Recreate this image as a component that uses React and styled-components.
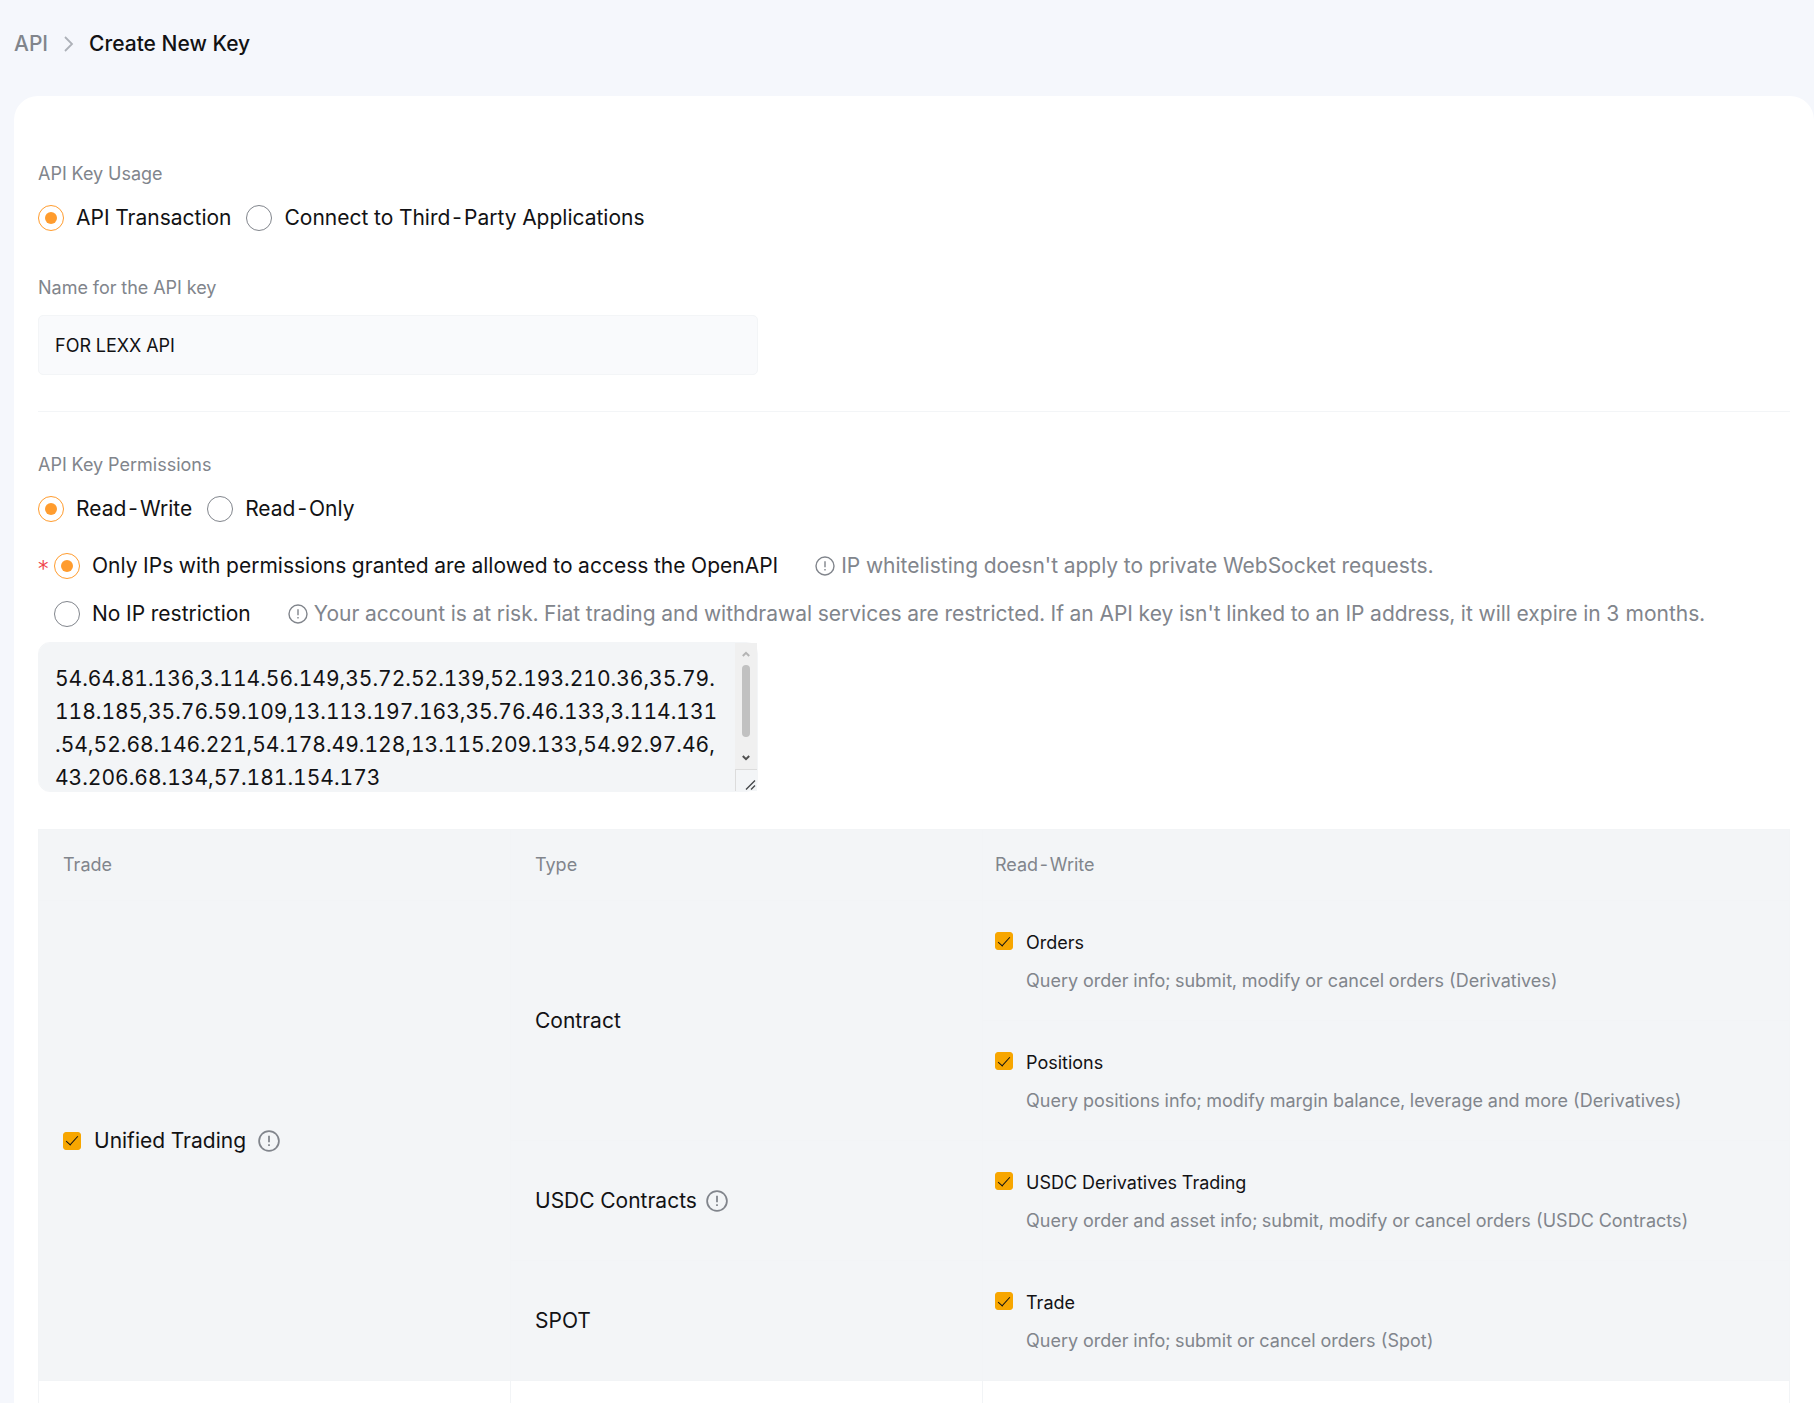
import React, { useState } from "react";
import styled, { createGlobalStyle } from "styled-components";

const GlobalStyle = createGlobalStyle`
  *, *::before, *::after { box-sizing: border-box; }
  body {
    margin: 0;
    background: #f5f7fc;
    color: #121214;
    font-family: Inter, "Liberation Sans", sans-serif;
    font-size: 21px;
    line-height: 30px;
    font-variant-numeric: tabular-nums;
  }
`;

const Page = styled.main`
  height: 100vh;
  overflow: hidden;
  padding-left: 14px;
`;

const Breadcrumb = styled.nav`
  display: flex;
  align-items: center;
  gap: 13px;
  height: 96px;
  padding-bottom: 8px;
`;

const CrumbLink = styled.a`
  color: #81858c;
  font-weight: 500;
  text-decoration: none;
`;

const CrumbCurrent = styled.span`
  font-weight: 500;
`;

const Panel = styled.section`
  min-height: calc(100vh - 96px);
  padding: 63px 24px 0;
  background: #ffffff;
  border-radius: 24px 24px 0 0;
`;

const Group = styled.fieldset`
  margin: 0;
  padding: 0;
  border: 0;
`;

const Caption = styled.legend`
  display: block;
  padding: 0;
  color: #81858c;
  font-size: 18px;
  line-height: 30px;
`;

const NameCaption = styled(Caption).attrs({ as: "label" })`
  margin-top: 40px;
`;

const Options = styled.div`
  display: flex;
  gap: 15px;
  margin-top: 14px;
`;

const Choice = styled.label`
  display: inline-flex;
  align-items: center;
  gap: 12px;
  cursor: pointer;
`;

const Radio = styled.input.attrs({ type: "radio" })`
  appearance: none;
  flex: none;
  display: grid;
  place-items: center;
  width: 26px;
  height: 26px;
  margin: 0;
  border: 1px solid #81858c;
  border-radius: 50%;
  background: #ffffff;

  &:checked { border-color: #ff9c2e; }
  &:checked::before {
    content: "";
    width: 12px;
    height: 12px;
    border-radius: 50%;
    background: #ff9c2e;
  }
`;

const NameInput = styled.input`
  display: block;
  width: 100%;
  max-width: 720px;
  height: 60px;
  margin-top: 12px;
  padding: 0 16px;
  border: 1px solid #f3f5f7;
  border-radius: 5px;
  background: #f9fafc;
  color: #121214;
  font: inherit;
  font-size: 18px;
  outline: none;
`;

const Divider = styled.hr`
  height: 1px;
  margin: 36px 0 38px;
  border: 0;
  background: #f3f5f7;
`;

const IpList = styled.div`
  display: grid;
  gap: 18px;
  margin-top: 27px;
`;

const IpRow = styled.div`
  display: grid;
  grid-template-columns: 16px auto 1fr;
  align-items: center;
`;

const Required = styled.span`
  padding-top: 6px;
  color: #ef454a;
  font-family: "DejaVu Sans", sans-serif;
  line-height: 24px;
`;

const Hint = styled.span`
  display: flex;
  align-items: center;
  gap: 6px;
  margin-left: 37px;
  color: #81858c;
`;

const IpBox = styled.div`
  position: relative;
  max-width: 720px;
  margin-top: 13px;
`;

const IpText = styled.textarea`
  display: block;
  width: 100%;
  height: 150px;
  padding: 19px 36px 0 16px;
  border: 1px solid #f3f5f7;
  border-radius: 12px;
  background: #f3f5f7;
  color: #121214;
  font: inherit;
  font-variant-numeric: tabular-nums;
  line-height: 33px;
  line-break: anywhere;
  resize: none;
  outline: none;
`;

const ScrollRail = styled.div`
  position: absolute;
  top: 1px;
  right: 1px;
  bottom: 1px;
  display: flex;
  flex-direction: column;
  width: 22px;
  background: #f0f0f0;
`;

const ScrollTrack = styled.div`
  flex: 1;
  display: flex;
  flex-direction: column;
  align-items: center;
  justify-content: space-between;
  padding: 8px 0;
`;

const ScrollThumb = styled.div`
  width: 8px;
  height: 72px;
  margin-bottom: 10px;
  border-radius: 4px;
  background: #c1c1c1;
`;

const ResizeCorner = styled.div`
  display: flex;
  align-items: flex-end;
  justify-content: flex-end;
  height: 22px;
  border: solid #dcdcdc;
  border-width: 1px 0 0 1px;
  background: #f3f5f7;
`;

const Permissions = styled.table`
  width: 100%;
  margin-top: 37px;
  border-collapse: collapse;
  table-layout: fixed;
  background: #f3f5f7;

  th, td {
    padding: 0 24px;
    border: 1px solid #f2f4f6;
    text-align: left;
    font-weight: 400;
  }
  th {
    height: 71px;
    color: #81858c;
    font-size: 18px;
  }
  td { height: 120px; }
  th:last-child { padding-left: 12px; }
`;

const PermissionCell = styled.td`
  && { padding: 0 12px 4px; }
`;

const EmptyRow = styled.tr`
  background: #ffffff;
`;

const Column = styled.col`
  width: ${(p) => p.$width};
`;

const WithIcon = styled.div`
  display: flex;
  align-items: center;
  gap: ${(p) => p.$gap};
`;

const Checkbox = styled.input.attrs({ type: "checkbox" })`
  appearance: none;
  flex: none;
  display: grid;
  place-items: center;
  width: 18px;
  height: 18px;
  margin: 0;
  border: 1px solid #81858c;
  border-radius: 3px;
  background: #ffffff;

  &:checked {
    border-color: #f7a600;
    background: #f7a600;
  }
  &:checked::before {
    content: "";
    width: 12px;
    height: 6px;
    margin-bottom: 3px;
    border: solid #121214;
    border-width: 0 0 1px 1px;
    transform: rotate(-48deg);
  }
`;

const AccountLabel = styled(Choice)`
  gap: 13px;
`;

const PermissionLabel = styled(AccountLabel)`
  align-items: flex-start;
  font-size: 18px;

  ${Checkbox} { margin-top: 4px; }
`;

const Description = styled.div`
  margin-top: 8px;
  padding-left: 31px;
  color: #81858c;
  font-size: 18px;
`;

function InfoIcon({ size = 20, stroke = 1.4 }) {
  return (
    <svg width={size} height={size} viewBox="0 0 20 20" fill="none" stroke="#81858c" strokeWidth={stroke} aria-hidden="true">
      <circle cx="10" cy="10" r="9" />
      <path d="M10 5.2v6M10 13v1.6" />
    </svg>
  );
}

function ChevronIcon() {
  return (
    <svg width="15" height="18" viewBox="0 0 15 18" fill="none" stroke="#adb1b8" strokeWidth="1.8" aria-hidden="true">
      <path d="M4 2l7 7-7 7" />
    </svg>
  );
}

function ArrowIcon({ color, d }) {
  return (
    <svg width="8" height="6" viewBox="0 0 8 6" fill="none" stroke={color} strokeWidth="2" aria-hidden="true">
      <path d={d} />
    </svg>
  );
}

function Scrollbar() {
  return (
    <ScrollRail aria-hidden="true">
      <ScrollTrack>
        <ArrowIcon color="#b4b4b4" d="M.8 5L4 1.8 7.2 5" />
        <ScrollThumb />
        <ArrowIcon color="#505050" d="M.8 1L4 4.2 7.2 1" />
      </ScrollTrack>
      <ResizeCorner>
        <svg width="12" height="12" viewBox="0 0 12 12" stroke="#46484c" strokeWidth="1.4">
          <path d="M1 10.5L10 1.5M6 10.5l4-4" />
        </svg>
      </ResizeCorner>
    </ScrollRail>
  );
}

function RadioOption({ name, value, selected, onSelect }) {
  return (
    <Choice>
      <Radio name={name} checked={selected === value} onChange={() => onSelect(value)} />
      {value}
    </Choice>
  );
}

function Permission({ title, description }) {
  return (
    <PermissionCell>
      <PermissionLabel>
        <Checkbox defaultChecked />
        {title}
      </PermissionLabel>
      <Description>{description}</Description>
    </PermissionCell>
  );
}

const IPS = [
  "54.64.81.136", "3.114.56.149", "35.72.52.139", "52.193.210.36", "35.79.118.185",
  "35.76.59.109", "13.113.197.163", "35.76.46.133", "3.114.131.54", "52.68.146.221",
  "54.178.49.128", "13.115.209.133", "54.92.97.46", "43.206.68.134", "57.181.154.173",
].join(",");

const ONLY_IPS = "Only IPs with permissions granted are allowed to access the OpenAPI";
const NO_IP = "No IP restriction";

export default function App() {
  const [usage, setUsage] = useState("API Transaction");
  const [access, setAccess] = useState("Read-Write");
  const [ip, setIp] = useState(ONLY_IPS);

  return (
    <Page>
      <GlobalStyle />
      <Breadcrumb aria-label="Breadcrumb">
        <CrumbLink href="#api">API</CrumbLink>
        <ChevronIcon />
        <CrumbCurrent aria-current="page">Create New Key</CrumbCurrent>
      </Breadcrumb>
      <Panel>
        <Group>
          <Caption>API Key Usage</Caption>
          <Options>
            <RadioOption name="usage" value="API Transaction" selected={usage} onSelect={setUsage} />
            <RadioOption name="usage" value="Connect to Third-Party Applications" selected={usage} onSelect={setUsage} />
          </Options>
        </Group>
        <NameCaption htmlFor="key-name">Name for the API key</NameCaption>
        <NameInput id="key-name" defaultValue="FOR LEXX API" />
        <Divider />
        <Group>
          <Caption>API Key Permissions</Caption>
          <Options>
            <RadioOption name="access" value="Read-Write" selected={access} onSelect={setAccess} />
            <RadioOption name="access" value="Read-Only" selected={access} onSelect={setAccess} />
          </Options>
        </Group>
        <IpList>
          <IpRow>
            <Required>*</Required>
            <RadioOption name="ip" value={ONLY_IPS} selected={ip} onSelect={setIp} />
            <Hint><InfoIcon />IP whitelisting doesn't apply to private WebSocket requests.</Hint>
          </IpRow>
          <IpRow>
            <span />
            <RadioOption name="ip" value={NO_IP} selected={ip} onSelect={setIp} />
            <Hint><InfoIcon />Your account is at risk. Fiat trading and withdrawal services are restricted. If an API key isn't linked to an IP address, it will expire in 3 months.</Hint>
          </IpRow>
        </IpList>
        <IpBox>
          <IpText aria-label="IP addresses" defaultValue={IPS} spellCheck={false} />
          <Scrollbar />
        </IpBox>
        <Permissions>
          <colgroup>
            <Column $width="472px" />
            <Column $width="472px" />
            <Column $width="auto" />
          </colgroup>
          <thead>
            <tr><th>Trade</th><th>Type</th><th>Read-Write</th></tr>
          </thead>
          <tbody>
            <tr>
              <td rowSpan={4}>
                <WithIcon $gap="12px">
                  <AccountLabel><Checkbox defaultChecked />Unified Trading</AccountLabel>
                  <InfoIcon size={22} stroke={1.6} />
                </WithIcon>
              </td>
              <td rowSpan={2}>Contract</td>
              <Permission title="Orders" description="Query order info; submit, modify or cancel orders (Derivatives)" />
            </tr>
            <tr>
              <Permission title="Positions" description="Query positions info; modify margin balance, leverage and more (Derivatives)" />
            </tr>
            <tr>
              <td><WithIcon $gap="9px">USDC Contracts<InfoIcon size={22} stroke={1.6} /></WithIcon></td>
              <Permission title="USDC Derivatives Trading" description="Query order and asset info; submit, modify or cancel orders (USDC Contracts)" />
            </tr>
            <tr>
              <td>SPOT</td>
              <Permission title="Trade" description="Query order info; submit or cancel orders (Spot)" />
            </tr>
            <EmptyRow><td /><td /><td /></EmptyRow>
          </tbody>
        </Permissions>
      </Panel>
    </Page>
  );
}
